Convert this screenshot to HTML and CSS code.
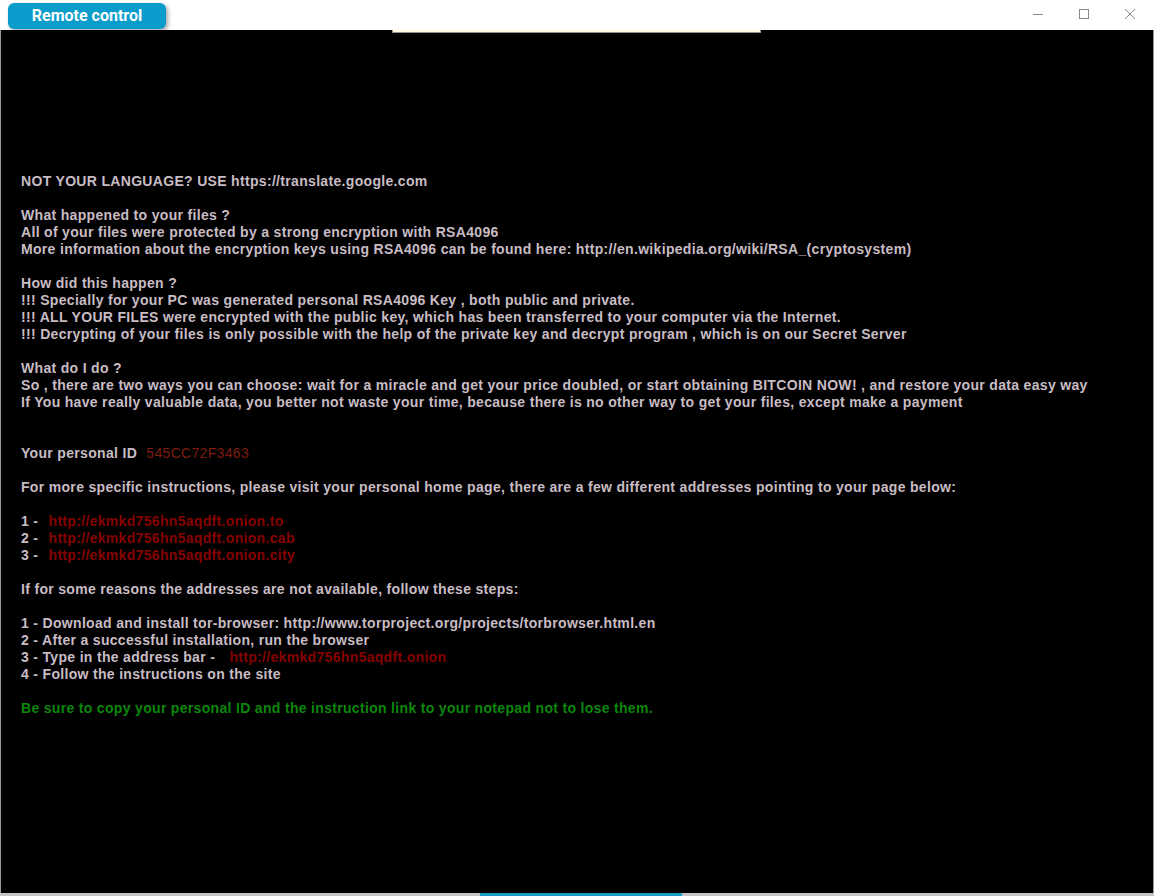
FILE: index.html
```html
<!DOCTYPE html>
<html lang="en">
<head>
  <meta charset="UTF-8">
  <title>Remote control</title>
  <link rel="stylesheet" href="styles.css">
</head>
<body>
  <div class="window">
    <div class="titlebar">
      <div class="remote-btn">Remote control</div>
      <div class="controls">
        <svg class="ctl" width="46" height="30" viewBox="0 0 46 30"><path d="M18 14.5h10" stroke="#8a8a8a" stroke-width="1"/></svg>
        <svg class="ctl" width="46" height="30" viewBox="0 0 46 30"><rect x="18.5" y="9.5" width="9" height="9" fill="none" stroke="#8a8a8a" stroke-width="1"/></svg>
        <svg class="ctl" width="46" height="30" viewBox="0 0 46 30"><path d="M18 9l10 10M28 9l-10 10" stroke="#8a8a8a" stroke-width="1"/></svg>
      </div>
    </div>
    <div class="strip"></div>
    <div class="screen">
      <div class="note">
        <div class="block">
          <div>NOT YOUR LANGUAGE? USE https://translate.google.com</div>
        </div>
        <div class="block">
          <div>What happened to your files ?</div>
          <div>All of your files were protected by a strong encryption with RSA4096</div>
          <div>More information about the encryption keys using RSA4096 can be found here: http://en.wikipedia.org/wiki/RSA_(cryptosystem)</div>
        </div>
        <div class="block">
          <div>How did this happen ?</div>
          <div>!!! Specially for your PC was generated personal RSA4096 Key , both public and private.</div>
          <div>!!! ALL YOUR FILES were encrypted with the public key, which has been transferred to your computer via the Internet.</div>
          <div>!!! Decrypting of your files is only possible with the help of the private key and decrypt program , which is on our Secret Server</div>
        </div>
        <div class="block wide">
          <div>What do I do ?</div>
          <div>So , there are two ways you can choose: wait for a miracle and get your price doubled, or start obtaining BITCOIN NOW! , and restore your data easy way</div>
          <div>If You have really valuable data, you better not waste your time, because there is no other way to get your files, except make a payment</div>
        </div>
        <div class="block">
          <div>Your personal ID <span class="pid">545CC72F3463</span></div>
        </div>
        <div class="block">
          <div>For more specific instructions, please visit your personal home page, there are a few different addresses pointing to your page below:</div>
        </div>
        <div class="block">
          <div>1 - <span class="link">http://ekmkd756hn5aqdft.onion.to</span></div>
          <div>2 - <span class="link">http://ekmkd756hn5aqdft.onion.cab</span></div>
          <div>3 - <span class="link">http://ekmkd756hn5aqdft.onion.city</span></div>
        </div>
        <div class="block">
          <div>If for some reasons the addresses are not available, follow these steps:</div>
        </div>
        <div class="block steps">
          <div>1 - Download and install tor-browser: http://www.torproject.org/projects/torbrowser.html.en</div>
          <div>2 - After a successful installation, run the browser</div>
          <div>3 - Type in the address bar - <span class="link bar">http://ekmkd756hn5aqdft.onion</span></div>
          <div>4 - Follow the instructions on the site</div>
        </div>
        <div class="block">
          <div class="green">Be sure to copy your personal ID and the instruction link to your notepad not to lose them.</div>
        </div>
      </div>
    </div>
    <div class="bottom"><div class="bottom-accent"></div></div>
  </div>
</body>
</html>
```

FILE: styles.css
```css
/* Basic styling */
body {
  margin: 0;
  padding: 0;
  background: #fff;
  width: 1154px;
  height: 896px;
  overflow: hidden;
}
.window {
  display: flex;
  flex-direction: column;
  height: 896px;
}
.titlebar {
  height: 30px;
  display: flex;
  justify-content: space-between;
  background: #fff;
}
.remote-btn {
  margin: 3px 0 1px 8px;
  width: 158px;
  background: #0a9ccb;
  border-radius: 6px;
  box-shadow: 2px 2px 4px rgba(0, 0, 0, 0.35);
  color: #fff;
  font-family: Roboto, "Liberation Sans", sans-serif;
  font-weight: bold;
  font-size: 16px;
  line-height: 26px;
  text-align: center;
}
.controls {
  display: flex;
  margin-right: 1px;
}
.strip {
  height: 0;
  position: relative;
}
.strip::after {
  content: "";
  position: absolute;
  left: 392px;
  top: 0;
  width: 367px;
  height: 2px;
  background: #fffbdc;
  border: 1px solid #8f8f8f;
  border-top: none;
  z-index: 2;
}
.screen {
  flex: 1;
  background: #000;
  border-left: 1px solid #9a9a9a;
  border-right: 1px solid #9a9a9a;
  padding: 143px 0 0 20px;
}
.note {
  font-family: "Liberation Sans", Arial, sans-serif;
  font-weight: bold;
  font-size: 14px;
  letter-spacing: 0.32px;
  line-height: 17px;
  color: #c8bcc4;
  white-space: nowrap;
}
.block {
  margin-bottom: 17px;
}
.block.wide {
  margin-bottom: 34px;
}
.pid {
  font-weight: normal;
  color: #7e1d10;
  margin-left: 5px;
}
.link {
  color: #860000;
  margin-left: 6px;
}
.link.bar {
  margin-left: 10px;
}
.green {
  color: #0b870b;
}
.bottom {
  height: 3px;
  background: #c4c4c4;
  position: relative;
}
.bottom-accent {
  position: absolute;
  left: 480px;
  width: 202px;
  top: 0;
  bottom: 0;
  background: #1b9ec4;
}
```
